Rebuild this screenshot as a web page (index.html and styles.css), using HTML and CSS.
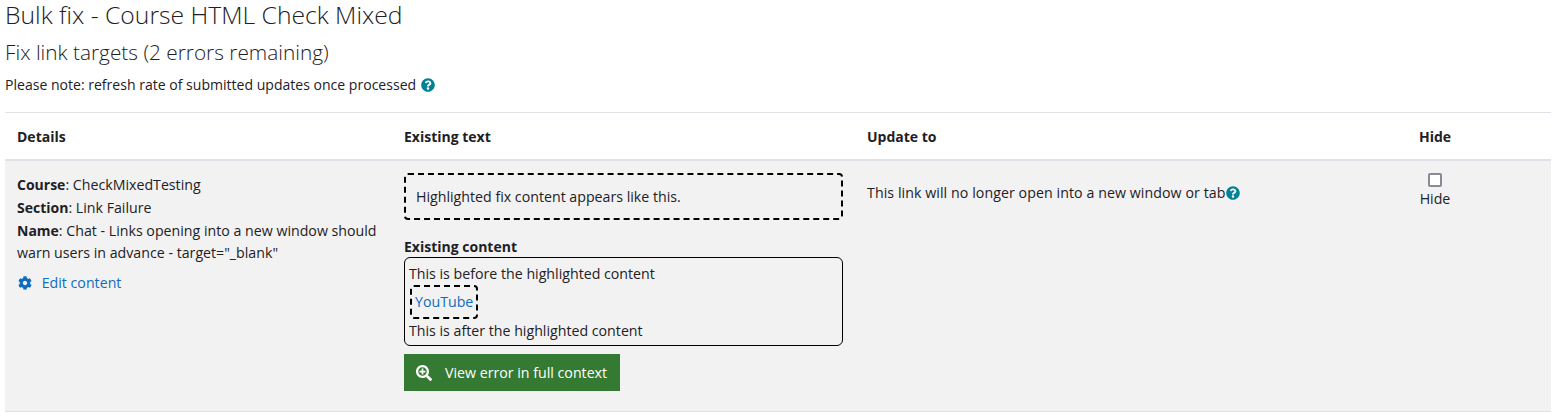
FILE: index.html
```html
<!DOCTYPE html>
<html lang="en">
<head>
  <meta charset="UTF-8" />
  <title>Bulk fix - Course HTML Check Mixed</title>
  <link rel="stylesheet" href="styles.css">
</head>
<body>
<h1 class="page-title">Bulk fix - Course HTML Check Mixed</h1>
<h2 class="sub-title">Fix link targets (2 errors remaining)</h2>
<p class="note">Please note: refresh rate of submitted updates once processed
  <svg class="help-icon note-help" viewBox="0 0 512 512"><path d="M504 256c0 136.997-111.043 248-248 248S8 392.997 8 256C8 119.083 119.043 8 256 8s248 111.083 248 248zM262.655 90c-54.497 0-89.255 22.957-116.549 63.758-3.536 5.286-2.353 12.415 2.715 16.258l34.699 26.31c5.205 3.947 12.621 3.008 16.665-2.122 17.864-22.658 30.113-35.797 57.303-35.797 20.429 0 45.698 13.148 45.698 32.958 0 14.976-12.363 22.667-32.534 33.976C247.128 238.528 216 254.941 216 296v4c0 6.627 5.373 12 12 12h56c6.627 0 12-5.373 12-12v-1.333c0-28.462 83.186-29.647 83.186-106.667 0-58.002-60.165-102-116.531-102zM256 338c-25.365 0-46 20.635-46 46 0 25.364 20.635 46 46 46s46-20.636 46-46c0-25.365-20.635-46-46-46z"/></svg>
</p>

<table class="fix-table">
  <colgroup>
    <col class="col-details">
    <col class="col-existing">
    <col class="col-update">
    <col class="col-hide">
  </colgroup>
  <thead>
    <tr>
      <th>Details</th>
      <th>Existing text</th>
      <th>Update to</th>
      <th>Hide</th>
    </tr>
  </thead>
  <tbody>
    <tr>
      <td>
        <div class="detail-lines">
          <div><strong>Course</strong>: CheckMixedTesting</div>
          <div><strong>Section</strong>: Link Failure</div>
          <div><strong>Name</strong>: Chat - Links opening into a new window should warn users in advance - target="_blank"</div>
        </div>
        <a class="edit-link" href="#">
          <svg class="cog-icon" viewBox="0 0 512 512"><path d="M487.4 315.7l-42.6-24.6c4.3-23.2 4.3-47 0-70.2l42.6-24.6c4.9-2.8 7.1-8.6 5.5-14-11.1-35.6-30-67.8-54.7-94.6-3.8-4.1-10-5.1-14.8-2.3L380.8 110c-17.9-15.4-38.5-27.3-60.8-35.1V25.8c0-5.6-3.9-10.5-9.4-11.7-36.7-8.2-74.3-7.8-109.2 0-5.5 1.2-9.4 6.1-9.4 11.7V75c-22.2 7.9-42.8 19.8-60.8 35.1L88.7 85.5c-4.9-2.8-11-1.9-14.8 2.3-24.7 26.7-43.6 58.9-54.7 94.6-1.7 5.4.6 11.2 5.5 14L67.3 221c-4.3 23.2-4.3 47 0 70.2l-42.6 24.6c-4.9 2.8-7.1 8.6-5.5 14 11.1 35.6 30 67.8 54.7 94.6 3.8 4.1 10 5.1 14.8 2.3l42.6-24.6c17.9 15.4 38.5 27.3 60.8 35.1v49.2c0 5.6 3.9 10.5 9.4 11.7 36.7 8.2 74.3 7.8 109.2 0 5.5-1.2 9.4-6.1 9.4-11.7v-49.2c22.2-7.9 42.8-19.8 60.8-35.1l42.6 24.6c4.9 2.8 11 1.9 14.8-2.3 24.7-26.7 43.6-58.9 54.7-94.6 1.5-5.5-.7-11.3-5.6-14.1zM256 336c-44.1 0-80-35.9-80-80s35.9-80 80-80 80 35.9 80 80-35.9 80-80 80z"/></svg>
          Edit content
        </a>
      </td>
      <td>
        <div class="highlight-box">Highlighted fix content appears like this.</div>
        <div class="existing-label">Existing content</div>
        <div class="existing-box">
          <div>This is before the highlighted content</div>
          <div class="yt-wrap"><a class="yt-link" href="#">YouTube</a></div>
          <div>This is after the highlighted content</div>
        </div>
        <a class="btn" href="#">
          <svg class="search-icon" viewBox="0 0 512 512"><path d="M304 192v32c0 6.6-5.4 12-12 12h-56v56c0 6.6-5.4 12-12 12h-32c-6.6 0-12-5.4-12-12v-56h-56c-6.6 0-12-5.4-12-12v-32c0-6.6 5.4-12 12-12h56v-56c0-6.6 5.4-12 12-12h32c6.6 0 12 5.4 12 12v56h56c6.6 0 12 5.4 12 12zm201 284.7L476.7 505c-9.4 9.4-24.6 9.4-33.9 0L343 405.3c-4.5-4.5-7-10.6-7-17V372c-35.3 27.6-79.7 44-128 44C93.1 416 0 322.9 0 208S93.1 0 208 0s208 93.1 208 208c0 48.3-16.4 92.7-44 128h16.3c6.4 0 12.5 2.5 17 7l99.7 99.7c9.3 9.4 9.3 24.6 0 34zM344 208c0-75.2-60.8-136-136-136S72 132.8 72 208s60.8 136 136 136 136-60.8 136-136z"/></svg>
          View error in full context
        </a>
      </td>
      <td>
        <div class="update-text">This link will no longer open into a new window or tab<svg class="help-icon" viewBox="0 0 512 512"><path d="M504 256c0 136.997-111.043 248-248 248S8 392.997 8 256C8 119.083 119.043 8 256 8s248 111.083 248 248zM262.655 90c-54.497 0-89.255 22.957-116.549 63.758-3.536 5.286-2.353 12.415 2.715 16.258l34.699 26.31c5.205 3.947 12.621 3.008 16.665-2.122 17.864-22.658 30.113-35.797 57.303-35.797 20.429 0 45.698 13.148 45.698 32.958 0 14.976-12.363 22.667-32.534 33.976C247.128 238.528 216 254.941 216 296v4c0 6.627 5.373 12 12 12h56c6.627 0 12-5.373 12-12v-1.333c0-28.462 83.186-29.647 83.186-106.667 0-58.002-60.165-102-116.531-102zM256 338c-25.365 0-46 20.635-46 46 0 25.364 20.635 46 46 46s46-20.636 46-46c0-25.365-20.635-46-46-46z"/></svg></div>
      </td>
      <td>
        <label class="hide-box">
          <span class="fake-check"></span>
          <span>Hide</span>
        </label>
      </td>
    </tr>
  </tbody>
</table>
</body>
</html>
```

FILE: styles.css
```css
html, body {
  overflow: hidden;
}

body {
  margin: 0;
  padding: 0 6px 0 5px;
  font-family: "Open Sans", sans-serif;
  font-size: 14.2px;
  line-height: 23px;
  color: #1d2125;
  background: #fff;
}

/* Headings */
.page-title {
  margin: 0;
  font-size: 24.7px;
  line-height: 30px;
  font-weight: 300;
}

.sub-title {
  margin: 8px 0 0;
  font-size: 20.8px;
  line-height: 28px;
  font-weight: 300;
}

.note {
  margin: 8px 0 0;
  font-size: 14.05px;
  line-height: 22px;
}

.help-icon {
  width: 14px;
  height: 14px;
  fill: #008196;
  vertical-align: -2px;
}

.note-help {
  margin-left: 1px;
}

/* Table */
.fix-table {
  width: 100%;
  margin-top: 16px;
  border-collapse: collapse;
  table-layout: fixed;
}

.col-details { width: 387px; }
.col-existing { width: 463px; }
.col-update { width: 552px; }

.fix-table th {
  padding: 12px 12px 11px;
  text-align: left;
  font-size: 14px;
  font-weight: 700;
  border-top: 1px solid #dee2e6;
  border-bottom: 2px solid #dee2e6;
}

.fix-table td {
  padding: 12px;
  vertical-align: top;
  background: #f2f2f2;
  border-bottom: 1px solid #dee2e6;
}

.detail-lines {
  margin-top: 1px;
  line-height: 22.75px;
}

.detail-lines strong {
  font-size: 14px;
}

.edit-link {
  display: block;
  margin-top: 6px;
  color: #0f6cbf;
  text-decoration: none;
}

.cog-icon {
  width: 14px;
  height: 14px;
  fill: #0f6cbf;
  margin: 0 6px 0 1px;
  vertical-align: -2px;
}

/* Existing text column */
.highlight-box {
  padding: 10px;
  border: 2px dashed #000;
  border-radius: 4px;
}

.existing-label {
  margin-top: 16px;
  font-size: 14px;
  font-weight: 700;
  line-height: 21px;
}

.existing-box {
  padding: 4px 4px 3px;
  border: 1px solid #000;
  border-radius: 6px;
}

.yt-wrap {
  display: flex;
}

.yt-link {
  padding: 3px 3px 4px;
  border: 2px dashed #000;
  border-radius: 4px;
  color: #0f6cbf;
  text-decoration: none;
  margin-left: 1px;
}

.btn {
  display: inline-flex;
  align-items: center;
  gap: 13px;
  margin: 8px 0;
  padding: 7px 13px 7px 12px;
  background: #357a32;
  color: #fff;
  text-decoration: none;
}

.search-icon {
  width: 16px;
  height: 16px;
  fill: #fff;
}

/* Update column */
.update-text {
  margin-top: 8px;
  letter-spacing: 0.07px;
}

/* Hide column */
.hide-box {
  display: flex;
  flex-direction: column;
  align-items: center;
  width: 32px;
}

.fake-check {
  box-sizing: border-box;
  width: 14px;
  height: 14px;
  border: 2px solid #8a8a94;
  border-radius: 2px;
  background: #fff;
}
```
